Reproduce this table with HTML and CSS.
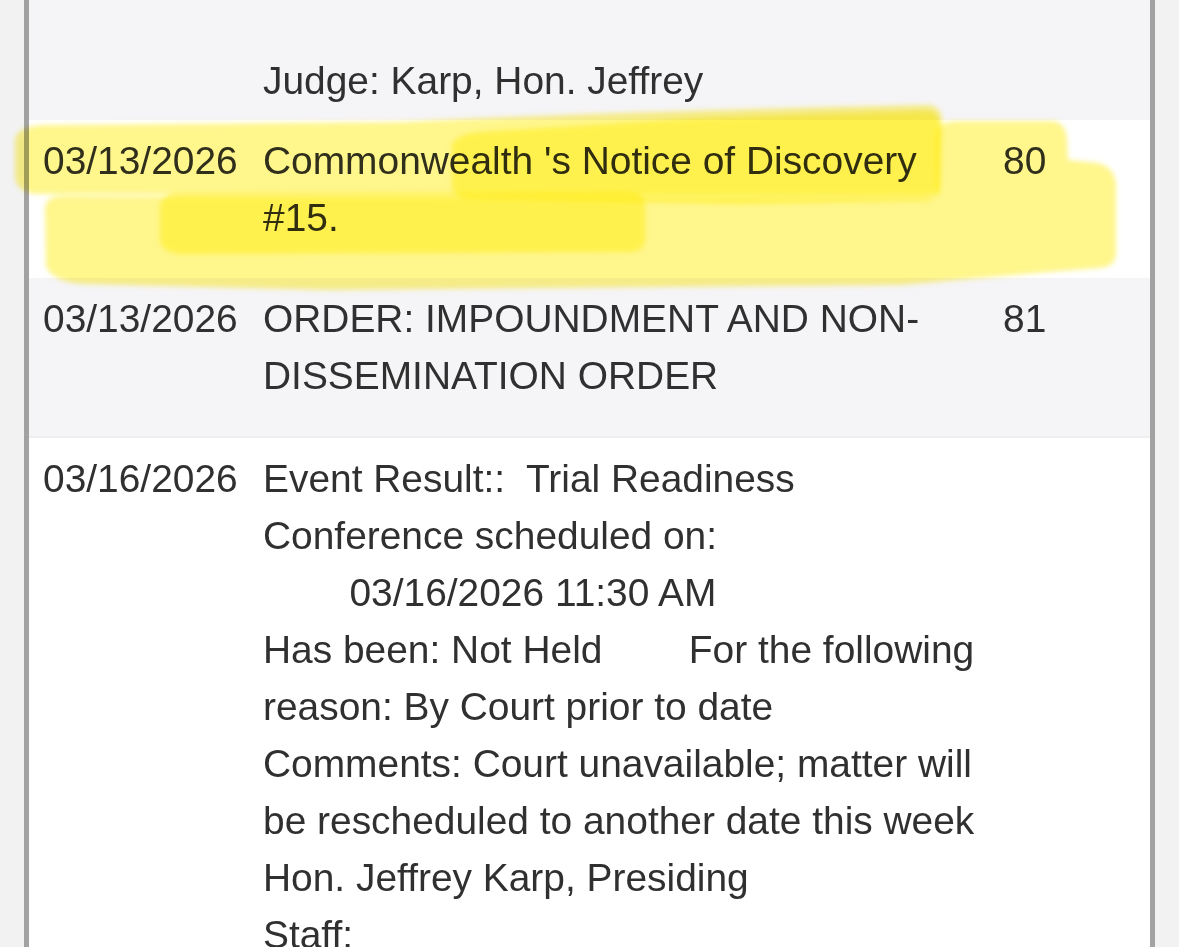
FILE: index.html
```html
<!DOCTYPE html>
<html lang="en">
<head>
<meta charset="utf-8">
<title>Docket</title>
<link rel="stylesheet" href="styles.css">
</head>
<body>
<div class="page">
  <div class="docket">
    <div class="row gray first">
      <div class="date"></div>
      <div class="desc"><div class="ln">Judge: Karp, Hon. Jeffrey</div></div>
      <div class="num"></div>
    </div>
    <div class="row white">
      <div class="date">03/13/2026</div>
      <div class="desc"><div class="ln">Commonwealth 's Notice of Discovery</div><div class="ln">#15.</div></div>
      <div class="num">80</div>
    </div>
    <div class="row gray">
      <div class="date">03/13/2026</div>
      <div class="desc"><div class="ln">ORDER: IMPOUNDMENT AND NON-</div><div class="ln">DISSEMINATION ORDER</div></div>
      <div class="num">81</div>
    </div>
    <div class="row white sep">
      <div class="date">03/16/2026</div>
      <div class="desc">
        <div class="ln">Event Result::  Trial Readiness</div>
        <div class="ln">Conference scheduled on:</div>
        <div class="ln">        03/16/2026 11:30 AM</div>
        <div class="ln">Has been: Not Held        For the following</div>
        <div class="ln">reason: By Court prior to date</div>
        <div class="ln">Comments: Court unavailable; matter will</div>
        <div class="ln">be rescheduled to another date this week</div>
        <div class="ln">Hon. Jeffrey Karp, Presiding</div>
        <div class="ln">Staff:</div>
      </div>
      <div class="num"></div>
    </div>
  </div>
  <svg class="highlight" width="1179" height="947" viewBox="0 0 1179 947" aria-hidden="true">
    <defs>
      <filter id="soft" x="-5%" y="-30%" width="110%" height="160%">
        <feGaussianBlur stdDeviation="2.6"/>
      </filter>
    </defs>
    <g fill="#ffec00" fill-opacity="0.45" filter="url(#soft)">
      <path d="M15,140 Q16,127 42,125 L400,122 Q650,110 928,105 Q942,106 942,122 L940,186 Q938,196 924,196 L36,194 Q17,192 15,178 Z"/>
      <path d="M452,144 Q458,134 480,132 L700,118 L928,111 Q940,113 940,126 L940,190 Q938,201 924,201 L740,204 L470,199 Q453,197 452,186 Z"/>
      <path d="M45,208 Q46,196 62,196 L936,198 L936,132 Q940,121 958,121 L1053,121 Q1066,123 1067,140 L1068,160 L1098,163 Q1116,168 1116,186 L1116,254 Q1115,267 1100,268 L1060,271 L900,285 L330,290 L84,284 Q52,282 46,266 Z"/>
      <path d="M160,206 Q162,193 180,193 L630,192 Q645,193 645,206 L645,240 Q644,252 630,252 L180,254 Q161,252 160,240 Z"/>
    </g>
  </svg>
</div>
</body>
</html>
```

FILE: styles.css
```css
html, body {
  margin: 0;
  padding: 0;
  background: #f2f2f3;
}

.page {
  position: relative;
  width: 1179px;
  height: 947px;
  overflow: hidden;
  background: #f2f2f3;
}

.docket {
  margin-left: 24px;
  width: 1121px;
  height: 947px;
  border-left: 5px solid #a2a2a2;
  border-right: 5px solid #a2a2a2;
  background: #ffffff;
  font-family: "Liberation Sans", Arial, Helvetica, sans-serif;
  font-size: 38.9px;
  line-height: 57px;
  color: #303030;
}

.row {
  display: grid;
  grid-template-columns: 234px 740px 147px;
  padding: 12px 0 32px;
}

.row.gray {
  background: #f5f4f6;
}

.row.white {
  background: #ffffff;
}

.row.first {
  height: 120px;
  box-sizing: border-box;
  padding: 52px 0 11px;
}

.row.sep {
  border-top: 2px solid #eeeeee;
  padding-top: 12px;
}

.date {
  padding-left: 14px;
  white-space: nowrap;
}

.desc .ln {
  white-space: pre;
}

.num {
  white-space: nowrap;
}

.highlight {
  position: absolute;
  left: 0;
  top: 0;
  pointer-events: none;
  mix-blend-mode: multiply;
}
```
